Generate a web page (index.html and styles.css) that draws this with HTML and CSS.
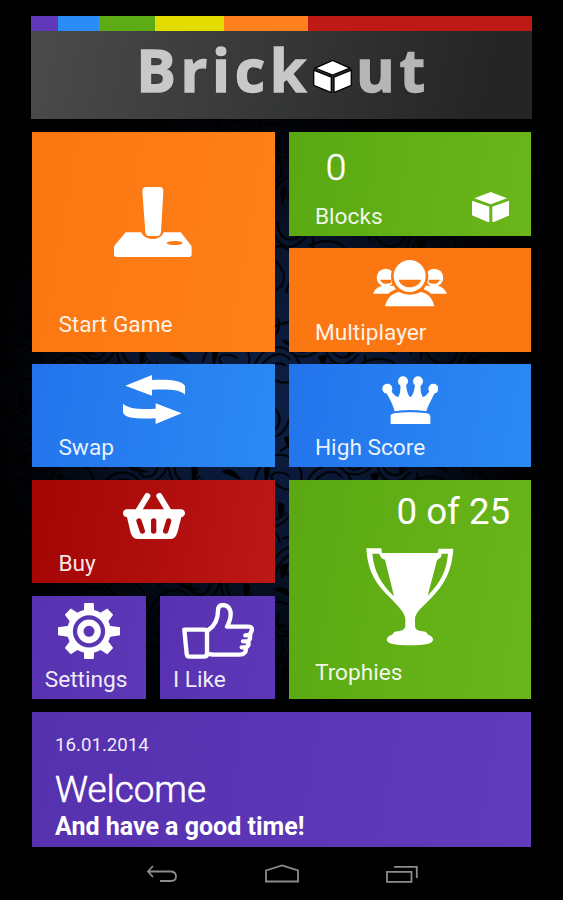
FILE: index.html
```
<!DOCTYPE html>
<html lang="en">
<head>
    <meta charset="utf-8">
    <title>Brickout</title>
    <link rel="stylesheet" href="styles.css">
</head>
<body>
    <!-- Ornament wallpaper -->
    <svg class="wallpaper" width="563" height="900">
        <defs>
            <pattern id="swirls" width="94" height="88" patternUnits="userSpaceOnUse" patternTransform="rotate(23)">
                <g fill="none" stroke="#000" stroke-width="2">
                    <path d="M2 70C-4 46 14 26 34 36S44 70 24 66S20 46 30 49M8 72C4 50 18 34 32 42"/>
                    <path d="M46 78C42 50 62 36 80 48S86 80 68 74S66 58 76 61"/>
                    <path d="M4 18C22 -4 48 2 46 20S22 30 28 16M54 8C64 32 86 34 92 10M60 8C68 24 82 24 88 8"/>
                    <path d="M34 36C50 34 56 24 54 8M58 42C68 24 84 26 94 38M0 34C10 28 12 18 4 8"/>
                </g>
                <path d="M8 60Q20 46 16 72ZM56 28Q68 16 64 36ZM50 64Q58 52 58 80ZM76 2Q88 -4 84 18ZM34 84Q20 72 12 84ZM40 24Q22 34 16 26Z" fill="#000"/>
            </pattern>
            <radialGradient id="glow" cx="50%" cy="50%" r="52%">
                <stop offset="0" stop-color="#0d1f45"/>
                <stop offset="0.45" stop-color="#08152e"/>
                <stop offset="1" stop-color="#000" stop-opacity="0"/>
            </radialGradient>
        </defs>
        <ellipse cx="265" cy="400" rx="300" ry="340" fill="url(#glow)"/>
        <rect width="563" height="848" fill="url(#swirls)"/>
    </svg>

    <header class="header">
        <div class="stripes">
            <span class="stripe purple"></span>
            <span class="stripe blue"></span>
            <span class="stripe green"></span>
            <span class="stripe yellow"></span>
            <span class="stripe orange"></span>
            <span class="stripe red"></span>
        </div>
        <h1 class="logo">
            <span class="logo-start">Brick</span>
            <svg class="logo-cube" viewBox="103 179 118 101">
                <g fill="#fff" stroke="#000" stroke-width="4">
                    <path d="M162 180L214 203L162 224L109 203Z"/>
                    <path d="M105 209L158 230V277L105 255Z"/>
                    <path d="M166 230L218 209V255L166 277Z"/>
                </g>
            </svg>
            <span class="logo-end">ut</span>
        </h1>
    </header>

    <main class="tiles">
        <a class="tile orange large start">
            <svg class="icon joystick" viewBox="284 186 234 210">
                <path fill="#fff" d="M379 186H423Q433 187 432 200L425 322Q423 333 414 333H389Q379 333 378 322L369 200Q368 187 379 186Z"/>
                <path fill="#fff" d="M319 322H366C375 349 425 349 433 322H484L515 361Q517 364 517 368V388Q517 396 509 396H292Q284 396 284 388V368Q284 363 287 360Z"/>
                <ellipse cx="466" cy="354" rx="24" ry="6" fill="#ff7b17"/>
            </svg>
            <span class="label">Start Game</span>
        </a>

        <a class="tile green blocks">
            <span class="count">0</span>
            <svg class="icon cube" viewBox="575 200 112 92">
                <path fill="#fff" d="M631 200L680 219L631 237L582 219ZM575 226L627 244V292L575 270ZM636 244L687 226V270L636 292Z"/>
            </svg>
            <span class="label">Blocks</span>
        </a>

        <a class="tile orange multiplayer">
            <svg class="icon people" viewBox="280 406 222 139">
                <g fill="#fff">
                    <circle cx="318" cy="459" r="27"/>
                    <circle cx="464" cy="459" r="27"/>
                    <path d="M280 507C288 488 300 484 312 483H348V507ZM502 507C493 488 481 484 470 483H433V507Z"/>
                </g>
                <g fill="#fa7712">
                    <path d="M301 465H335V474Q309 484 301 465ZM447 465H481Q473 484 447 474Z"/>
                    <circle cx="390" cy="455" r="56"/>
                    <path d="M308 545Q318 495 360 492H420Q462 495 472 545Z"/>
                </g>
                <circle cx="390" cy="454" r="48" fill="#fff"/>
                <path d="M357 465H424C418 495 363 495 357 465Z" fill="#fa7712"/>
                <path d="M316 545C323 519 338 505 358 502Q390 518 424 502C446 506 459 522 464 545Z" fill="#fff"/>
            </svg>
            <span class="label">Multiplayer</span>
        </a>

        <a class="tile blue swap">
            <svg class="icon arrows" viewBox="309 61 187 147">
                <path fill="#fff" d="M316 93L396 61V76C450 73 494 78 496 98V121C482 105 449 103 396 105V123ZM309 147C328 163 359 164 407 162V146L485 176L407 208V191C348 193 309 190 309 171Z"/>
            </svg>
            <span class="label">Swap</span>
        </a>

        <a class="tile blue score">
            <svg class="icon crown" viewBox="305 62 170 146">
                <g fill="#fff">
                    <circle cx="321" cy="100" r="15"/>
                    <circle cx="368" cy="78" r="15"/>
                    <circle cx="413" cy="78" r="15"/>
                    <circle cx="459" cy="100" r="15"/>
                    <path d="M315 108L331 105Q343 124 354 125Q362 110 360 88H377Q381 121 390 125Q400 121 404 88H421Q419 110 427 125Q438 124 449 105L465 108C454 133 445 147 438 168Q390 160 343 168Q336 142 315 108Z"/>
                    <path d="M331 180Q334 175 342 174Q390 167 439 174Q448 175 450 182V206H331Z"/>
                </g>
            </svg>
            <span class="label">High Score</span>
        </a>

        <a class="tile red buy">
            <svg class="icon basket" viewBox="309 68 186 138">
                <path d="M382 77L354 123M418 77L446 123" fill="none" stroke="#fff" stroke-width="18" stroke-linecap="round"/>
                <path fill="#fff" d="M321 117H482Q494 117 495 129Q494 138 484 141L472 187Q466 206 450 206H354Q338 206 332 187L321 141Q309 139 309 129Q310 117 321 117Z"/>
                <path d="M357 152L367 182M401 152V182M446 152L437 182" fill="none" stroke="#ad0d0d" stroke-width="16" stroke-linecap="round"/>
            </svg>
            <span class="label">Buy</span>
        </a>

        <a class="tile green large trophies">
            <span class="count">0 of 25</span>
            <svg class="icon cup" viewBox="258 235 263 292">
                <path fill="#fff" fill-rule="evenodd" d="M259 236H304L306 250H473L476 237H520C517 300 494 345 450 389C424 415 405 430 405 449V470Q406 483 427 485Q441 486 444 495Q459 499 459 510Q459 527 390 527T320 510Q321 499 337 495Q340 486 353 485Q374 483 376 470V449C375 430 353 408 335 389C290 346 263 310 259 236ZM277 252C282 309 305 343 342 380L315 270Q302 268 298 252ZM485 252L483 262L471 272L443 378C482 338 499 305 504 252Z"/>
            </svg>
            <span class="label">Trophies</span>
        </a>

        <a class="tile purple small settings">
            <svg class="icon gear" viewBox="-93 -85 186 170">
                <g fill="#fff">
                    <path d="M-14 -85H14L16 -55H-16ZM-16 55H16L14 85H-14ZM-93 -12L-60 -17V17L-93 12ZM93 -12L60 -17V17L93 12Z"/>
                    <path d="M-13 -87H13L19 -55H-19ZM-13 87H13L19 55H-19Z" transform="rotate(47)"/>
                    <path d="M-13 -87H13L19 -55H-19ZM-13 87H13L19 55H-19Z" transform="rotate(-47)"/>
                </g>
                <circle r="57" fill="none" stroke="#fff" stroke-width="17"/>
                <circle r="26" fill="none" stroke="#fff" stroke-width="19"/>
            </svg>
            <span class="label">Settings</span>
        </a>

        <a class="tile purple small like">
            <svg class="icon thumb" viewBox="484 54 216 167">
                <g fill="none" stroke="#fff" stroke-width="13" stroke-linejoin="round" stroke-linecap="round">
                    <path d="M491 134L551 134Q559 134 559 144V206Q559 215 549 215H506Q499 215 498 206Z"/>
                    <path d="M562 136C580 124 592 106 592 77Q592 60 607 60Q627 61 630 83Q631 102 619 125H684Q696 125 693 137L688 149L674 151M688 149Q690 163 682 169L667 169M682 169Q687 182 676 187L663 187M676 187Q678 209 656 209H578Q567 206 562 208"/>
                </g>
            </svg>
            <span class="label">I Like</span>
        </a>

        <section class="tile purple news">
            <time class="date">16.01.2014</time>
            <h2 class="title">Welcome</h2>
            <p class="text">And have a good time!</p>
        </section>
    </main>

    <!-- Android navigation bar -->
    <nav class="navbar">
        <svg class="nav-back" viewBox="0 0 32 18">
            <path d="M7 1L2 6.5L7 12M2 6.5H25Q30 7 30 11.5T25 16H14"/>
        </svg>
        <svg class="nav-home" viewBox="0 0 36 19">
            <path d="M2 6.5L18 1.5L34 6.5V17.5H2Z"/>
        </svg>
        <svg class="nav-recent" viewBox="0 0 34 18">
            <path d="M2 6.8H26.5V16.8H2ZM9 1.8H31.8V13"/>
        </svg>
    </nav>
</body>
</html>
```
FILE: styles.css
```
* {
    box-sizing: border-box;
}
body {
    margin: 0;
    width: 563px;
    height: 900px;
    overflow: hidden;
    background-color: #000;
    color: white;
    font-family: Roboto, Arial, sans-serif;
}
.wallpaper {
    position: absolute;
    top: 0;
    left: 0;
    z-index: -1;
}

/* Header */
.header {
    width: 501.5px;
    height: 103px;
    margin: 16.4px 0 0 30.7px;
    background: linear-gradient(100deg, #4b4b4b, #353636 50%, #252525 90%);
}
.stripes {
    display: flex;
    height: 14.5px;
}
.stripe.purple { width: 27.8px; background: #6038b8; }
.stripe.blue { width: 40.5px; background: #2b8cf5; }
.stripe.green { width: 56px; background: #5dab15; }
.stripe.yellow { width: 69px; background: #e3dc00; }
.stripe.orange { width: 84px; background: #ff801f; }
.stripe.red { flex: 1; background: #bd1915; }
.logo {
    display: flex;
    margin: 0;
    padding-left: 105.5px;
    font: bold 59px/76px "Open Sans", "Noto Sans", sans-serif;
    letter-spacing: 4.7px;
    color: #c0c0c0;
    text-shadow: 0 0 2px #111;
}
.logo-start {
    width: 177px;
    color: #c8c8c8;
    -webkit-text-stroke: 1.4px #c8c8c8;
}
.logo-cube {
    width: 39.3px;
    height: 33.7px;
    margin-top: 28.9px;
}
.logo-end {
    margin-left: 3.5px;
    color: #b6b6b6;
    -webkit-text-stroke: 1.4px #b6b6b6;
}

/* Tiles */
.tiles {
    display: grid;
    grid-template-columns: repeat(4, 114.2px);
    grid-template-rows: repeat(5, 103.5px) 135.8px;
    gap: 12.4px 14.1px;
    margin: 12.8px 0 0 32.2px;
}
.tile {
    display: grid;
    grid-template: 100% / 100%;
    grid-column: span 2;
}
.tile > * {
    grid-area: 1 / 1;
}
.tile.large {
    grid-row: span 2;
}
.tile.small {
    grid-column: span 1;
}
.tile.orange { background: linear-gradient(100deg, #fb7610, #ff8019); }
.tile.green { background: linear-gradient(100deg, #5aa912, #6ab61b); }
.tile.blue { background: linear-gradient(100deg, #2374ec, #2b8af3); }
.tile.red { background: linear-gradient(100deg, #a30404, #bc1817); }
.tile.purple { background: linear-gradient(100deg, #5832b0, #5c38b8); }
.tile.news { background: linear-gradient(100deg, #5631ae, #603bbb); }
.tile.multiplayer { background: #fa7712; }

.label {
    align-self: end;
    padding: 0 0 7px 26.2px;
    font-size: 22.7px;
    line-height: 24px;
    color: rgba(255, 255, 255, 0.92);
}
.large .label {
    padding-bottom: 14.5px;
}
.small .label {
    padding-left: 12.5px;
}
.count {
    font-size: 37px;
    line-height: 40px;
}
.blocks .count {
    padding: 16px 0 0 37px;
    font-weight: 300;
    -webkit-text-stroke: 0.6px #fff;
}
.trophies .count {
    padding: 12.5px 21px 0 0;
    font-size: 36.7px;
    text-align: right;
}

.icon {
    justify-self: center;
}
.joystick { width: 78px; height: 70px; margin-top: 55px; }
.cube { width: 37.3px; height: 30.7px; margin: 59.5px 22px 0 0; }
.blocks .cube { justify-self: end; }
.people { width: 74px; height: 46.3px; margin-top: 12.4px; }
.arrows { width: 62.3px; height: 49px; margin: 11.4px 0 0 1px; }
.crown { width: 56.7px; height: 48.7px; margin-top: 11.9px; }
.basket { width: 62px; height: 46px; margin: 12.8px 0 0 1px; }
.cup { width: 87.7px; height: 97.3px; margin-top: 68.4px; }
.gear { width: 62px; height: 56.7px; margin-top: 7px; }
.thumb { width: 72px; height: 55.7px; margin-top: 7.2px; }

/* News tile */
.tile.news {
    grid-column: span 4;
    display: block;
    padding: 20px 0 0 22.8px;
}
.date {
    display: block;
    font-size: 18.7px;
    line-height: 26px;
    color: rgba(255, 255, 255, 0.92);
}
.title {
    margin: 0;
    padding-top: 12.5px;
    font-size: 36.8px;
    font-weight: 300;
    line-height: 40px;
    -webkit-text-stroke: 0.6px #fff;
}
.text {
    margin: 0;
    font-size: 25px;
    font-weight: bold;
    line-height: 34px;
}

/* Navigation bar */
.navbar {
    display: flex;
    align-items: flex-start;
    padding: 18px 0 0 146px;
}
.navbar svg {
    fill: none;
    stroke: #8c8c8c;
    stroke-width: 1.8;
}
.nav-back { width: 32px; height: 18px; }
.nav-home { width: 36px; height: 19px; margin-left: 86px; margin-top: -1px; }
.nav-recent { width: 34px; height: 18px; margin-left: 85px; }
```
